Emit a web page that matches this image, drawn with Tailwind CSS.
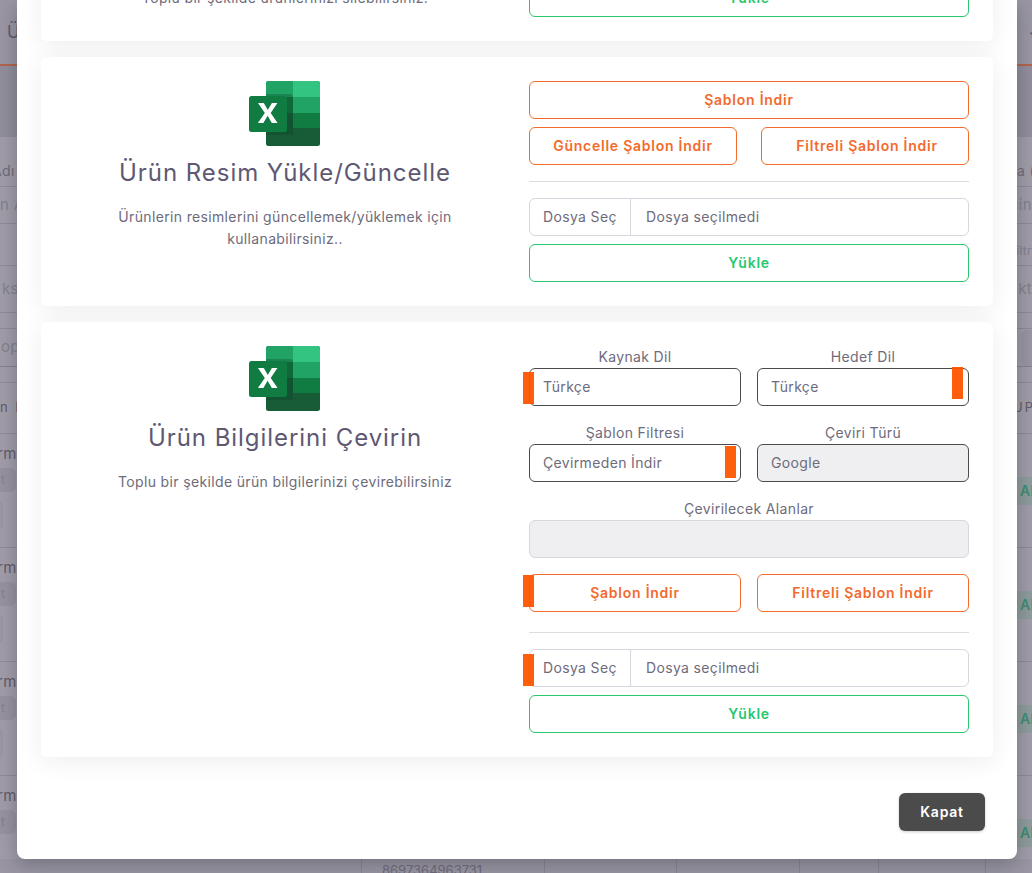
<!doctype html>
<html lang="tr">
<head>
<meta charset="utf-8">
<title>Ürün Yükleme</title>
<script src="https://cdn.jsdelivr.net/npm/@tailwindcss/browser@4"></script>
</head>
<body class="m-0">
<div class="relative w-[1032px] h-[873px] overflow-hidden bg-[#a19da9] font-['Inter','Liberation_Sans',sans-serif] text-[14px] tracking-[0.35px] text-[#6e6b7b]">

  <!-- dimmed page behind the modal -->
  <div class="flex flex-col w-full text-[#6f6b7b]">
    <div class="h-[66px] border-b-2 border-[#b5644c] bg-[#9b97a4] flex justify-between pl-[7px] pt-[20px] text-[17px] text-[#5f5b6b]"><span>Ürün</span><span class="-mr-[10px]">⌄</span></div>
    <div class="h-[71px] bg-[#928e9c]"></div>
    <div class="h-[50px] border-b border-[#8f8b98] flex justify-between items-end pb-[5px]"><span class="-ml-[8px]">Adı</span><span class="-mr-[3px]">a (</span></div>
    <div class="h-[37px] border-b border-[#8f8b98] flex justify-between items-center text-[#85818f] text-[15px]"><span>n A</span><span>cin</span></div>
    <div class="h-[42px] border-b border-[#8f8b98] flex justify-end items-end pb-[5px] text-[#85818f] text-[12px]"><span>iltr</span></div>
    <div class="h-[47px] border-b border-[#8f8b98] flex justify-between items-center text-[#85818f] text-[15px]"><span class="ml-[2px]">ks</span><span>kt</span></div>
    <div class="h-[16px] border-b border-[#8f8b98]"></div>
    <div class="h-[38px] border-b border-[#85818f] flex justify-between items-center text-[#85818f] text-[15px]"><span class="ml-[1px]">op</span><span class="w-[11px] h-[36px] bg-[#9a96a3] rounded-l-md"></span></div>
    <div class="h-[16px] border-b border-[#8f8b98]"></div>
    <div class="h-[51px] border-b border-[#8f8b98] flex justify-between items-center text-[13px] text-[#5f5b6b] tracking-[2px]"><span>n D</span><span class="-mr-[3px]">UP</span></div>

    <div class="h-[114px] border-b border-[#8f8b98] flex justify-between">
      <div class="flex flex-col items-start pt-[9px] text-[15px] text-[#5f5b6b]">
        <span class="h-[22px] leading-[22px] -ml-[3px]">rm</span>
        <span class="mt-[3px] w-[16px] h-[24px] pl-[1px] bg-[#97939f] rounded-r-md text-[#85818f] text-[12px] leading-[24px]">t</span>
        <span class="mt-[9px] w-[3px] h-[28px] bg-[#9b97a3] rounded-r-full"></span>
      </div>
      <div class="pt-[43px]"><span class="block h-[28px] w-[15px] pl-[3px] bg-[#8f9c9d] text-[#3f8d6f] text-[14px] font-semibold leading-[28px] whitespace-nowrap overflow-hidden">AK</span></div>
    </div>
    <div class="h-[114px] border-b border-[#8f8b98] flex justify-between">
      <div class="flex flex-col items-start pt-[9px] text-[15px] text-[#5f5b6b]">
        <span class="h-[22px] leading-[22px] -ml-[3px]">rm</span>
        <span class="mt-[3px] w-[16px] h-[24px] pl-[1px] bg-[#97939f] rounded-r-md text-[#85818f] text-[12px] leading-[24px]">t</span>
        <span class="mt-[9px] w-[3px] h-[28px] bg-[#9b97a3] rounded-r-full"></span>
      </div>
      <div class="pt-[43px]"><span class="block h-[28px] w-[15px] pl-[3px] bg-[#8f9c9d] text-[#3f8d6f] text-[14px] font-semibold leading-[28px] whitespace-nowrap overflow-hidden">AK</span></div>
    </div>
    <div class="h-[114px] border-b border-[#8f8b98] flex justify-between">
      <div class="flex flex-col items-start pt-[9px] text-[15px] text-[#5f5b6b]">
        <span class="h-[22px] leading-[22px] -ml-[3px]">rm</span>
        <span class="mt-[3px] w-[16px] h-[24px] pl-[1px] bg-[#97939f] rounded-r-md text-[#85818f] text-[12px] leading-[24px]">t</span>
        <span class="mt-[9px] w-[3px] h-[28px] bg-[#9b97a3] rounded-r-full"></span>
      </div>
      <div class="pt-[43px]"><span class="block h-[28px] w-[15px] pl-[3px] bg-[#8f9c9d] text-[#3f8d6f] text-[14px] font-semibold leading-[28px] whitespace-nowrap overflow-hidden">AK</span></div>
    </div>
    <div class="h-[97px] relative flex justify-between">
      <div class="flex flex-col items-start pt-[9px] text-[15px] text-[#5f5b6b]">
        <span class="h-[22px] leading-[22px] -ml-[3px]">rm</span>
        <span class="mt-[3px] w-[16px] h-[24px] pl-[1px] bg-[#97939f] rounded-r-md text-[#85818f] text-[12px] leading-[24px]">t</span>
      </div>
      <div class="pt-[43px]"><span class="block h-[28px] w-[15px] pl-[3px] bg-[#8f9c9d] text-[#3f8d6f] text-[14px] font-semibold leading-[28px] whitespace-nowrap overflow-hidden">AK</span></div>
      <div class="absolute left-0 right-0 bottom-0 h-[14px] bg-[#9a96a3] overflow-hidden flex text-[#6f6b7b] text-[13px] tracking-normal">
        <div class="w-[362px] border-r border-[#8a8693]"></div>
        <div class="w-[183px] border-r border-[#8a8693] pl-[20px] pt-[3px] leading-[16px]">8697364963731</div>
        <div class="w-[132px] border-r border-[#8a8693]"></div>
        <div class="w-[123px] border-r border-[#8a8693]"></div>
        <div class="w-[79px] border-r border-[#8a8693]"></div>
        <div class="w-[107px] border-r border-[#8a8693]"></div>
      </div>
    </div>
  </div>

  <!-- modal -->
  <div class="absolute left-[17px] top-0 w-[1000px] h-[859px] bg-white rounded-b-lg overflow-hidden flex flex-col justify-end shadow-[0_5px_20px_rgba(34,41,47,0.35)]">
    <div class="px-6 flex flex-col gap-4">

      <!-- card 1 -->
      <section class="bg-white rounded-md shadow-[0_4px_24px_rgba(34,41,47,0.08)] p-6 grid grid-cols-2 gap-6">
        <div class="flex flex-col items-center text-center">
          <p class="mt-[8px] leading-[22px]">Toplu bir şekilde ürünlerinizi silebilirsiniz.</p>
        </div>
        <div class="flex flex-col">
          <button class="h-[38px] pb-[1px] rounded-md border border-[#28c76f] text-[#28c76f] font-semibold tracking-[0.75px] bg-white">Yükle</button>
        </div>
      </section>

      <!-- card 2 -->
      <section class="bg-white rounded-md shadow-[0_4px_24px_rgba(34,41,47,0.08)] p-6 grid grid-cols-2 gap-6">
        <div class="flex flex-col items-center text-center">
          <svg class="w-[71px] h-[65px] -ml-[1px]" viewBox="0 0 71 65" aria-hidden="true">
            <rect x="17" width="54" height="65" rx="2.500" fill="#185c37"/>
            <path d="M19.500 0H44v16H17V2.500A2.500 2.500 0 0 1 19.500 0Z" fill="#21a366"/>
            <path d="M44 0h24.500A2.500 2.500 0 0 1 71 2.500V16H44Z" fill="#33c481"/>
            <rect x="44" y="16" width="27" height="16" fill="#21a366"/>
            <rect x="17" y="16" width="27" height="16" fill="#107c41"/>
            <rect x="44" y="32" width="27" height="15" fill="#107c41"/>
            <path d="M17 13h24a3 3 0 0 1 3 3v38H17Z" fill="#0b3f23" opacity=".3"/>
            <rect y="15" width="38" height="36" rx="2.500" fill="#107c41"/>
            <path d="M9 22h5.800l4 7 4.100-7h5.500l-6.700 10 6.900 10h-5.800l-4.200-7.200-4.200 7.200H8.900l6.900-10Z" fill="#fff"/>
          </svg>
          <h2 class="mt-[12px] text-[24px] leading-[30px] text-[#5e5873] font-normal tracking-[0.95px]">Ürün Resim Yükle/Güncelle</h2>
          <p class="mt-[18px] leading-[22px] w-[360px]">Ürünlerin resimlerini güncellemek/yüklemek için kullanabilirsiniz..</p>
        </div>
        <div class="flex flex-col">
          <button class="h-[38px] pb-[1px] rounded-md border border-[#f26b2d] text-[#f26b2d] font-semibold tracking-[0.75px] bg-white">Şablon İndir</button>
          <div class="grid grid-cols-2 gap-6 mt-2">
            <button class="h-[38px] pb-[1px] rounded-md border border-[#f26b2d] text-[#f26b2d] font-semibold tracking-[0.75px] bg-white">Güncelle Şablon İndir</button>
            <button class="h-[38px] pb-[1px] pl-[4px] rounded-md border border-[#f26b2d] text-[#f26b2d] font-semibold tracking-[0.75px] bg-white">Filtreli Şablon İndir</button>
          </div>
          <hr class="mt-4 mb-4 border-t border-[#dedde2]">
          <div class="h-[38px] rounded-md border border-[#d8d6de] flex items-center">
            <span class="w-[101px] h-full pb-[1px] border-r border-[#d8d6de] flex items-center pl-[13px]">Dosya Seç</span>
            <span class="pl-[15px] pb-[1px]">Dosya seçilmedi</span>
          </div>
          <button class="h-[38px] pb-[1px] mt-2 rounded-md border border-[#28c76f] text-[#28c76f] font-semibold tracking-[0.75px] bg-white">Yükle</button>
        </div>
      </section>

      <!-- card 3 -->
      <section class="bg-white rounded-md shadow-[0_4px_24px_rgba(34,41,47,0.08)] p-6 grid grid-cols-2 gap-6">
        <div class="flex flex-col items-center text-center">
          <svg class="w-[71px] h-[65px] -ml-[1px]" viewBox="0 0 71 65" aria-hidden="true">
            <rect x="17" width="54" height="65" rx="2.500" fill="#185c37"/>
            <path d="M19.500 0H44v16H17V2.500A2.500 2.500 0 0 1 19.500 0Z" fill="#21a366"/>
            <path d="M44 0h24.500A2.500 2.500 0 0 1 71 2.500V16H44Z" fill="#33c481"/>
            <rect x="44" y="16" width="27" height="16" fill="#21a366"/>
            <rect x="17" y="16" width="27" height="16" fill="#107c41"/>
            <rect x="44" y="32" width="27" height="15" fill="#107c41"/>
            <path d="M17 13h24a3 3 0 0 1 3 3v38H17Z" fill="#0b3f23" opacity=".3"/>
            <rect y="15" width="38" height="36" rx="2.500" fill="#107c41"/>
            <path d="M9 22h5.800l4 7 4.100-7h5.500l-6.700 10 6.900 10h-5.800l-4.200-7.200-4.200 7.200H8.900l6.900-10Z" fill="#fff"/>
          </svg>
          <h2 class="mt-[12px] text-[24px] leading-[30px] text-[#5e5873] font-normal tracking-[0.95px]">Ürün Bilgilerini Çevirin</h2>
          <p class="mt-[18px] leading-[22px]">Toplu bir şekilde ürün bilgilerinizi çevirebilirsiniz</p>
        </div>
        <div class="flex flex-col relative">
          <div class="grid grid-cols-2 gap-x-4 gap-y-4">
            <div class="flex flex-col">
              <label class="h-[22px] leading-[22px] text-center">Kaynak Dil</label>
              <div class="h-[38px] pb-[1px] rounded-md border border-[#4b4b4b] flex items-center px-[13px] bg-white">Türkçe</div>
            </div>
            <div class="flex flex-col">
              <label class="h-[22px] leading-[22px] text-center">Hedef Dil</label>
              <div class="h-[38px] pb-[1px] rounded-md border border-[#4b4b4b] flex items-center px-[13px] bg-white">Türkçe</div>
            </div>
            <div class="flex flex-col">
              <label class="h-[22px] leading-[22px] text-center">Şablon Filtresi</label>
              <div class="h-[38px] pb-[1px] rounded-md border border-[#4b4b4b] flex items-center px-[13px] bg-white">Çevirmeden İndir</div>
            </div>
            <div class="flex flex-col">
              <label class="h-[22px] leading-[22px] text-center">Çeviri Türü</label>
              <div class="h-[38px] pb-[1px] rounded-md border border-[#4b4b4b] flex items-center px-[13px] bg-[#efeff1]">Google</div>
            </div>
            <div class="flex flex-col col-span-2">
              <label class="h-[22px] leading-[22px] text-center">Çevirilecek Alanlar</label>
              <div class="h-[38px] rounded-md border border-[#d8d6de] bg-[#efeff1]"></div>
            </div>
            <button class="h-[38px] pb-[1px] rounded-md border border-[#f26b2d] text-[#f26b2d] font-semibold tracking-[0.75px] bg-white">Şablon İndir</button>
            <button class="h-[38px] pb-[1px] rounded-md border border-[#f26b2d] text-[#f26b2d] font-semibold tracking-[0.75px] bg-white">Filtreli Şablon İndir</button>
          </div>
          <hr class="mt-5 mb-4 border-t border-[#dedde2]">
          <div class="h-[38px] rounded-md border border-[#d8d6de] flex items-center">
            <span class="w-[101px] h-full pb-[1px] border-r border-[#d8d6de] flex items-center pl-[13px]">Dosya Seç</span>
            <span class="pl-[15px] pb-[1px]">Dosya seçilmedi</span>
          </div>
          <button class="h-[38px] pb-[1px] mt-2 rounded-md border border-[#28c76f] text-[#28c76f] font-semibold tracking-[0.75px] bg-white">Yükle</button>

          <!-- orange markers lying over the fields -->
          <span class="absolute left-[-6px] top-[26px] w-[11px] h-[32px] bg-[#ff5500]/95"></span>
          <span class="absolute left-[423px] top-[21px] w-[11px] h-[32px] bg-[#ff5500]/95"></span>
          <span class="absolute left-[196px] top-[100px] w-[11px] h-[32px] bg-[#ff5500]/95"></span>
          <span class="absolute left-[-6px] top-[229px] w-[11px] h-[32px] bg-[#ff5500]/95"></span>
          <span class="absolute left-[-6px] top-[308px] w-[11px] h-[32px] bg-[#ff5500]/95"></span>
        </div>
      </section>
    </div>

    <div class="flex justify-end pt-9 pb-7 pr-8">
      <button class="w-[86px] h-[38px] pb-[1px] rounded-md bg-[#4b4b4b] text-white font-semibold tracking-[0.75px] shadow-[0_1px_3px_rgba(0,0,0,0.2)]">Kapat</button>
    </div>
  </div>
</div>
</body>
</html>
